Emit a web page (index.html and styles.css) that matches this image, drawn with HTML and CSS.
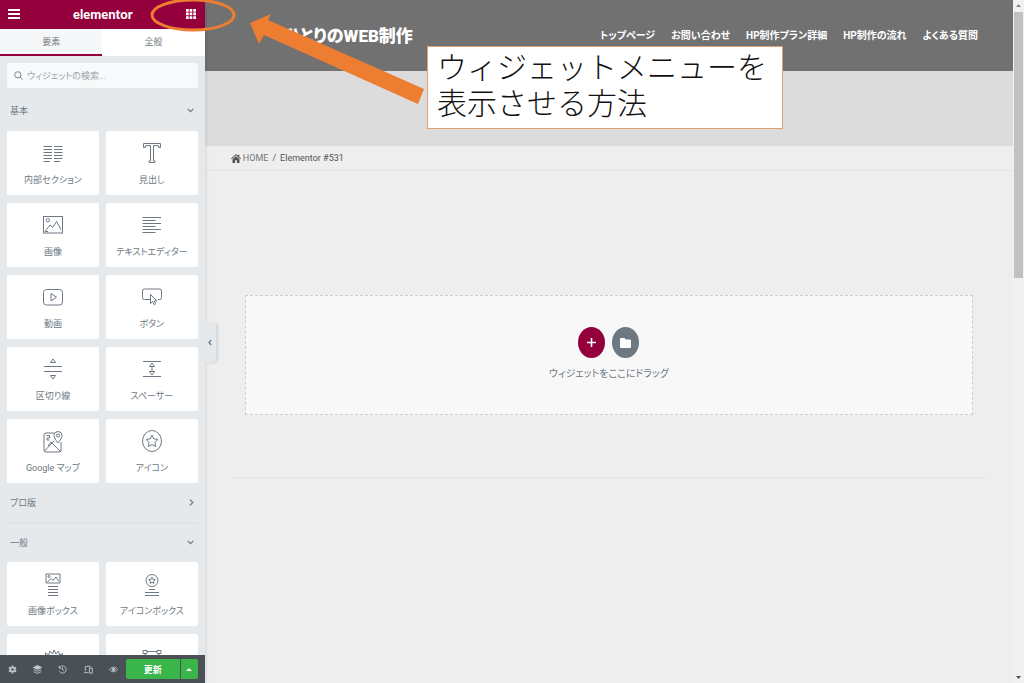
FILE: index.html
```html
<!DOCTYPE html>
<html lang="ja">
<head>
<meta charset="utf-8">
<title>Elementor</title>
<link rel="stylesheet" href="styles.css">
</head>
<body>
<div class="app">
  <aside class="panel">
    <header class="panel-header">
      <button class="icon-button" aria-label="メニュー"><svg width="12" height="10" viewBox="0 0 12 10"><path d="M0 1h12M0 5h12M0 9h12" stroke="#fff" stroke-width="2"/></svg></button>
      <span class="brand">elementor</span>
      <button class="icon-button" aria-label="ウィジェット"><svg width="10" height="10" viewBox="0 0 10 10" fill="#fff"><path d="M0 0h2.7v2.7H0zM3.6 0h2.7v2.7H3.6zM7.3 0H10v2.7H7.3zM0 3.6h2.7v2.7H0zM3.6 3.6h2.7v2.7H3.6zM7.3 3.6H10v2.7H7.3zM0 7.3h2.7V10H0zM3.6 7.3h2.7V10H3.6zM7.3 7.3H10V10H7.3z"/></svg></button>
    </header>
    <nav class="tabs">
      <button class="tab tab-active">要素</button>
      <button class="tab">全般</button>
    </nav>
    <div class="panel-body">
      <label class="search">
        <svg width="9" height="9" viewBox="0 0 9 9" fill="none" stroke="#7d868e"><circle cx="3.8" cy="3.8" r="3.1"/><path d="M6 6l2.6 2.6"/></svg>
        <input type="text" aria-label="ウィジェットの検索" placeholder="ウィジェットの検索...">
      </label>
      <button class="category">基本<svg class="chevron" width="7" height="5" viewBox="0 0 7 5"><path d="M.7 .9l2.8 2.8L6.300 .9"/></svg></button>
      <div class="widgets">
        <button class="widget"><svg viewBox="0 0 20 20"><path d="M0.500 3.500h8.500M11 3.500h8.500M0.500 6.500h8.500M11 6.500h8.500M0.500 9.500h8.500M11 9.500h8.500M0.500 12.500h8.500M11 12.500h8.500M0.500 15.500h8.500M11 15.500h8.500M0.500 18.500h6M11 18.500h6"/></svg>内部セクション</button>
        <button class="widget"><svg viewBox="0 0 20 20"><path d="M1.500 .500h17v4h-1.800v-1.800h-5.200v15.300h1.500v1.500H7v-1.500h1.500V2.700H3.300v1.800H1.500z"/></svg>見出し</button>
        <button class="widget"><svg viewBox="0 0 20 20"><rect x=".5" y="1.500" width="19" height="16.500"/><circle cx="4.800" cy="5.300" r="1.700"/><path d="M2 16.500l5-6.500 2.500 2.500L13.500 6.500 18 14.500M2 16.500h3"/></svg>画像</button>
        <button class="widget"><svg viewBox="0 0 20 20"><path d="M.5 2.500h18.500M.5 5.500h13M.5 8.500h18.500M.5 11.500h13M.5 14.500h18.500M.5 17.500h13"/></svg>テキストエディター</button>
        <button class="widget"><svg viewBox="0 0 20 20"><rect x=".5" y="2.500" width="19" height="15.500" rx="3"/><path d="M8 6.500l5.500 3.700L8 14z"/></svg>動画</button>
        <button class="widget"><svg viewBox="0 0 20 20"><path d="M8 12.500H2.500a2 2 0 0 1-2-2V4a2 2 0 0 1 2-2h15a2 2 0 0 1 2 2v6.500a2 2 0 0 1-2 2H16M8.500 7.500v9l2.200-2 1.500 3.200 1.500-.8-1.500-3h2.800z"/></svg>ボタン</button>
        <button class="widget"><svg viewBox="0 0 20 20"><path d="M1 7.500h18M1 12.500h18M10 0l2.500 3.500h-5zM10 20l2.500-3.500h-5z"/></svg>区切り線</button>
        <button class="widget"><svg viewBox="0 0 20 20"><path d="M1 2.500h18M1 17.500h18M10 7v6M10 4l2.500 3.500h-5zM10 16l2.500-3.500h-5z"/></svg>スペーサー</button>
        <button class="widget"><svg viewBox="0 0 20 20"><path d="M11 2H3a2 2 0 0 0-2 2v15a2 2 0 0 0 2 2h13a2 2 0 0 0 2-2v-8M1.500 20l9.500-10M5 15l3-4 9.500 9.500M15 12c-2-3-4-5-4-7.500a4 4 0 0 1 8 0c0 2.500-2 4.500-4 7.500zM3.500 4.500h3v2.500h-2.500v2h2.500"/><circle cx="15" cy="4.500" r="1.500"/></svg>Google マップ</button>
        <button class="widget"><svg viewBox="0 0 20 20"><ellipse cx="10" cy="10" rx="9.500" ry="10.500"/><path d="M10 4l1.800 3.900 4.200.5-3.100 2.900.8 4.300L10 13.500l-3.700 2.100.8-4.300L4 8.400l4.200-.5z"/></svg>アイコン</button>
      </div>
      <button class="category category-closed">プロ版<svg class="chevron" width="5" height="7" viewBox="0 0 5 7"><path d="M1 .7l2.800 2.800L1 6.300"/></svg></button>
      <button class="category">一般<svg class="chevron" width="7" height="5" viewBox="0 0 7 5"><path d="M.7 .9l2.800 2.800L6.300 .9"/></svg></button>
      <div class="widgets">
        <button class="widget"><svg viewBox="0 0 20 20"><path d="M3 0h14v9H3zM4.500 8l3.500-3.500 2 2L13 3l3 4.500M5 12.500h10M5 15.500h10M5 18.500h10M5 21.500h10"/><circle cx="6" cy="2.500" r="1"/></svg>画像ボックス</button>
        <button class="widget"><svg viewBox="0 0 20 20"><circle cx="10" cy="6.500" r="6"/><path d="M10 3.300l1 2 2.200.3-1.600 1.600.4 2.200-2-1.100-2 1.100.4-2.200-1.600-1.600 2.200-.3zM7 15.500h6M3 18.500h14M3 21.500h14"/></svg>アイコンボックス</button>
        <button class="widget" aria-label="画像カルーセル"><svg viewBox="0 0 20 20"><path d="M2.500 11V7l3 2 1.500-4 2.500 3L11 4l2 4 2.500-3 1 4 3-1.500V11"/></svg></button>
        <button class="widget" aria-label="ギャラリー"><svg viewBox="0 0 20 20"><path d="M1 4.500h4v3H1zM15 4.500h4v3h-4zM5 5.500h10M3 7.500v12M17 7.500v12"/></svg></button>
      </div>
    </div>
    <footer class="panel-footer">
      <button class="tool" aria-label="設定"><svg viewBox="0 0 10 10"><circle cx="5" cy="5" r="2.400" stroke-width="2"/><path d="M5 .5v1.500M5 8v1.500M1 2.800l1.400.8M7.600 6.400l1.400.8M1 7.200l1.400-.8M7.600 3.600L9 2.800" stroke-width="2"/></svg></button>
      <button class="tool" aria-label="ナビゲーター"><svg viewBox="0 0 10 10"><path class="solid" d="M5 .5L9.500 2.700 5 4.900.500 2.700z"/><path d="M.8 5L5 7l4.200-2M.8 7.300L5 9.300l4.200-2"/></svg></button>
      <button class="tool" aria-label="履歴"><svg viewBox="0 0 10 10"><path d="M1.500 3.200a4 4 0 1 1 0 3.600M1.200.8v2.700H4M5 2.800V5.300l1.800 1"/></svg></button>
      <button class="tool" aria-label="レスポンシブモード"><svg viewBox="0 0 10 10"><path d="M1.500 7V1.500H7V3M0 8.500h5M6 3.500h3.300v5.500H6z"/></svg></button>
      <button class="tool" aria-label="プレビュー"><svg viewBox="0 0 10 10"><path d="M.5 5c2-3.300 7-3.300 9 0-2 3.300-7 3.300-9 0z"/><circle class="solid" cx="5" cy="5" r="1.500"/></svg></button>
      <div class="publish">
        <button class="update">更新</button>
        <button class="update-more" aria-label="保存オプション"><svg width="6" height="3" viewBox="0 0 6 3"><path d="M0 3l3-3 3 3z" fill="#fff"/></svg></button>
      </div>
    </footer>
    <button class="collapse" aria-label="パネルを隠す"><svg class="chevron" width="4" height="7" viewBox="0 0 4 7"><path d="M3.200 1L1 3.500 3.200 6"/></svg></button>
  </aside>

  <main class="preview">
    <header class="site-header">
      <a class="site-logo" href="#">ひとりのWEB制作</a>
      <nav class="site-nav">
        <a href="#">トップページ</a>
        <a href="#">お問い合わせ</a>
        <a href="#">HP制作プラン詳細</a>
        <a href="#">HP制作の流れ</a>
        <a href="#">よくある質問</a>
      </nav>
    </header>
    <div class="hero"></div>
    <nav class="breadcrumb">
      <a href="#"><svg width="10" height="9" viewBox="0 0 10 9" fill="#555"><path d="M5 0l2 1.800V.8h1.300v2.200L10 4.600l-.6.600L5 1.300.600 5.200 0 4.600zM5 2.200l3.500 3V9H5.900V6.200H4.100V9H1.500V5.200z"/></svg>HOME</a>
      <span>/</span>
      <span>Elementor #531</span>
    </nav>
    <section class="content">
      <div class="dropzone">
        <div class="dropzone-actions">
          <button class="round add" aria-label="セクションを追加"><svg width="9" height="9" viewBox="0 0 9 9"><path d="M4.500 0v9M0 4.500h9" stroke="#fff" stroke-width="1.600"/></svg></button>
          <button class="round folder" aria-label="テンプレートを追加"><svg width="11" height="10" viewBox="0 0 11 10"><path d="M1 0h3.500l1.300 1.500H10a1 1 0 0 1 1 1V9a1 1 0 0 1-1 1H1a1 1 0 0 1-1-1V1a1 1 0 0 1 1-1z" fill="#fff"/></svg></button>
        </div>
        <p class="dropzone-text">ウィジェットをここにドラッグ</p>
      </div>
    </section>
  </main>

  <div class="scrollbar">
    <svg width="11" height="12" viewBox="0 0 11 12"><path d="M3 7l2.500-3L8 7z" fill="#888"/></svg>
    <div class="thumb"></div>
    <svg width="11" height="12" viewBox="0 0 11 12"><path d="M3 5l2.500 3L8 5z" fill="#505050"/></svg>
  </div>

  <svg class="annotation" width="440" height="120" viewBox="0 0 440 120">
    <ellipse cx="193" cy="15" rx="41" ry="15" fill="none" stroke="#ed7d31" stroke-width="3"/>
    <path d="M250 23l21-9-3 6 156 69-6 15-154-69-5 9z" fill="#ed7d31"/>
  </svg>
  <p class="callout">ウィジェットメニューを<br>表示させる方法</p>
</div>
</body>
</html>
```
FILE: styles.css
```css
* { box-sizing: border-box; }
body {
  margin: 0;
  font-family: Roboto, "Noto Sans CJK JP", sans-serif;
  font-size: 9px;
  font-feature-settings: "palt";
  color: #6d7882;
}
button {
  display: flex;
  align-items: center;
  justify-content: center;
  padding: 0;
  border: 0;
  background: none;
  font: inherit;
  font-feature-settings: inherit;
  color: inherit;
}
a { color: inherit; text-decoration: none; }
p { margin: 0; }

.app {
  position: relative;
  display: flex;
  height: 100vh;
  overflow: hidden;
  background: #eee;
}

/* Editor panel */
.panel {
  position: relative;
  flex: 0 0 20%;
  min-width: 0;
  display: flex;
  flex-direction: column;
  background: #e6e9ec;
  box-shadow: 0 0 5px rgba(0, 0, 0, .15);
}
.panel-header {
  display: flex;
  align-items: center;
  justify-content: space-between;
  flex: 0 0 29px;
  padding: 0 9px 2px 8px;
  background: #93003c;
}
.brand {
  font-family: Lato, sans-serif;
  font-size: 13px;
  font-weight: 900;
  line-height: 16px;
  color: #fff;
}
.tabs { display: flex; flex: 0 0 27px; background: #fff; }
.tab { flex: 1; border-bottom: 2px solid transparent; }
.tab-active { background: #f6f7f8; border-color: #93003c; }
.panel-body { flex: 1; min-height: 0; overflow: hidden; padding: 7px 7px 0; }
.search {
  display: flex;
  align-items: center;
  gap: 4px;
  height: 25px;
  padding: 0 7px;
  border-radius: 2px;
  background: #f8f9fa;
}
.search input {
  flex: 1;
  min-width: 0;
  padding: 0;
  border: 0;
  outline: 0;
  background: none;
  font: inherit;
  font-feature-settings: inherit;
}
.search input::placeholder { color: #9aa2aa; }
.category {
  justify-content: space-between;
  width: 100%;
  height: 38px;
  padding: 0 4px 2px 3px;
}
.category:first-of-type { height: 43px; padding: 2px 4px 0 3px; }
.category-closed { border-bottom: 2px solid #dfe3e6; height: 41px; padding-bottom: 0; }
.chevron { fill: none; stroke: #6d7882; stroke-width: 1.2; }
.widgets { display: grid; grid-template-columns: 1fr 1fr; gap: 8px 7px; }
.widget {
  flex-direction: column;
  justify-content: flex-start;
  gap: 10px;
  height: 64px;
  padding-top: 12px;
  border-radius: 2px;
  background: #fff;
  line-height: 14px;
}
.widget svg {
  width: 20px;
  height: 20px;
  overflow: visible;
  fill: none;
  stroke: #6d7882;
}
.panel-footer {
  position: relative;
  display: flex;
  align-items: center;
  flex: 0 0 28px;
  padding-right: 7px;
  background: #495157;
}
.tool { flex: 1; height: 100%; }
.tool svg { width: 9px; height: 9px; fill: none; stroke: #c2c8cc; }
.tool .solid { fill: #c2c8cc; }
.publish { display: flex; flex: 0 0 72px; gap: 1px; height: 20px; color: #fff; font-weight: 700; }
.update, .update-more { background: #39b54a; }
.update { flex: 1; border-radius: 2px 0 0 2px; }
.update-more { flex: 0 0 17px; border-radius: 0 2px 2px 0; }
.collapse {
  position: absolute;
  left: 100%;
  top: 322px;
  width: 11px;
  height: 40px;
  border-radius: 0 3px 3px 0;
  background: #e6e9ec;
  box-shadow: 2px 1px 3px rgba(0, 0, 0, .1);
}

/* Site preview */
.preview { flex: 1; min-width: 0; }
.site-header {
  display: flex;
  align-items: center;
  justify-content: space-between;
  height: 71px;
  padding: 0 35px 3px 79px;
  background: #717171;
  color: #fff;
  font-weight: 700;
}
.site-logo { font-size: 17px; font-weight: 900; }
.site-nav { display: flex; gap: 16px; font-size: 10px; }
.hero { height: 75px; background: #dcdcdc; }
.breadcrumb {
  display: flex;
  align-items: center;
  gap: 4px;
  height: 25px;
  padding: 0 26px;
  border-bottom: 1px solid #e4e4e4;
  color: #555;
}
.breadcrumb a { display: flex; align-items: center; gap: 2px; color: #777; }
.content {
  margin: 0 27px;
  padding: 124px 13px 62px;
  border-bottom: 1px solid #e4e4e4;
}
.dropzone {
  display: flex;
  flex-direction: column;
  align-items: center;
  gap: 8px;
  padding: 31px 0 32px;
  border: 1px dashed #c9ced2;
  background: #f8f8f8;
}
.dropzone-actions { display: flex; gap: 7px; }
.round { width: 27px; height: 31px; border-radius: 50%; }
.add { background: #93003c; }
.folder { background: #6d7882; }
.dropzone-text { font-size: 10px; line-height: 16px; }

.scrollbar {
  display: flex;
  flex-direction: column;
  flex: 0 0 11px;
  background: #f1f1f1;
}
.scrollbar svg { flex: none; }
.scrollbar .thumb { flex: 0 0 39%; margin: 0 1px; background: #c1c1c1; }
.scrollbar .thumb + svg { margin-top: auto; }

/* Notes over the editor */
.annotation { position: absolute; left: 0; top: 0; pointer-events: none; }
.callout {
  position: absolute;
  left: 427px;
  top: 46px;
  padding: 0 15px 9px 9px;
  border: 1px solid #e0a070;
  background: #fff;
  font-family: "Noto Sans CJK JP", sans-serif;
  font-feature-settings: normal;
  font-size: 30px;
  font-weight: 300;
  line-height: 36px;
  color: #111;
}
```
